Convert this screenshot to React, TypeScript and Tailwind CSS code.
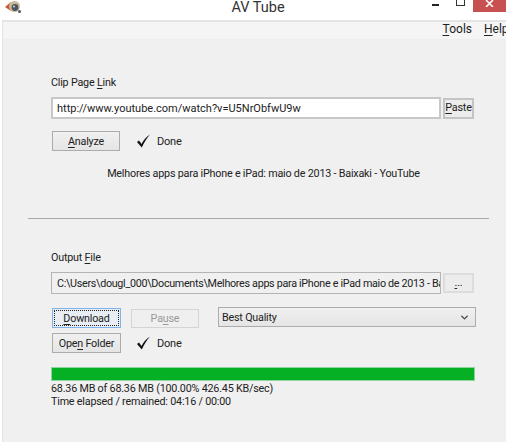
import React from 'react';
import { ChevronDown } from 'lucide-react';

const Key: React.FC<{ children: React.ReactNode }> = ({ children }) => <span className="underline underline-offset-2">{children}</span>;

const CheckMark: React.FC = () => (
  <svg width="15" height="14" viewBox="0 0 15 14" className="shrink-0">
    <path d="M1 8 L3 6.5 L5.5 10 C7.5 6 10 3 14 0.5 C10.5 4.5 8 8.5 5.8 13.5 Z" fill="#111" />
  </svg>
);

const Done: React.FC = () => (
  <div className="flex items-center gap-[6px]">
    <CheckMark />
    <span className="text-[11px]">Done</span>
  </div>
);

const App: React.FC = () => {
  return (
    <div className='font-["Roboto","Open_Sans",sans-serif] flex flex-col w-[506px] h-[442px] overflow-hidden bg-white text-[10.75px] tracking-[-0.2px] leading-[13px] text-[#222]'>
      {/* title bar */}
      <div className="relative flex h-[20px] shrink-0 items-start">
        <svg width="18" height="15" viewBox="0 0 18 15" className="ml-[4px]">
          <path d="M1 7 L7 2 L7 11 Z" fill="#c8562a" />
          <circle cx="10.5" cy="6.5" r="5.5" fill="#c9b99c" />
          <circle cx="11" cy="7.5" r="3.4" fill="#4a5560" />
          <circle cx="10" cy="6.5" r="1" fill="#d8d8d8" />
          <circle cx="15.5" cy="11.5" r="1.5" fill="#555" />
        </svg>
        <div className="absolute left-[10px] right-0 -top-[2px] text-center text-[14.5px] leading-[20px] tracking-normal text-[#333]">AV Tube</div>
        <div className="ml-auto flex items-start">
          <div className="mt-[4px] mr-[17px] h-[2px] w-[7px] bg-[#222]" />
          <div className="mr-[8px] h-[6px] w-[9px] border border-t-0 border-[#333]" />
          <div className="flex h-[12px] w-[33px] items-start justify-center bg-[#c75050]">
            <svg width="9" height="7" viewBox="0 0 9 7">
              <path d="M1 0 L4.5 3.5 L8 0 M4.5 3.5 L1 7 M4.5 3.5 L8 7" stroke="#fff" strokeWidth="1.6" fill="none" />
            </svg>
          </div>
        </div>
      </div>

      {/* window body */}
      <div className="ml-[2px] flex flex-1 flex-col border-l border-t-2 border-[#e4e4e4] bg-[#f0f0f0]">
        <div className="flex h-[18px] shrink-0 justify-end gap-[12px] overflow-hidden border-b border-[#eeeeee] bg-[#f5f5f5] pt-[1px] text-[12px] tracking-normal">
          <span><Key>T</Key>ools</span>
          <span className="w-[22px] overflow-hidden"><Key>H</Key>elp</span>
        </div>

        <div className="flex flex-col pl-[48px] pr-[30px] pt-[36px]">
          <div>Clip Page <Key>L</Key>ink</div>

          <div className="mt-[8px] flex items-center gap-[2px]">
            <div className="flex h-[22px] w-[390px] items-center border-2 border-[#c8c8c8] bg-white pl-[4px] text-[11px] tracking-normal">
              http://www.youtube.com/watch?v=U5NrObfwU9w
            </div>
            <button className="h-[21px] w-[31px] border-2 border-[#c4c4c4] bg-[#ececec] leading-none"><Key>P</Key>aste</button>
          </div>

          <div className="mt-[12px] flex items-center gap-[16px] pl-[1px]">
            <button className="h-[20px] w-[68px] border border-[#acacac] bg-gradient-to-b from-[#f0f0f0] to-[#e5e5e5]"><Key>A</Key>nalyze</button>
            <Done />
          </div>

          <div className="mt-[16px] px-[6px] text-center">Melhores apps para iPhone e iPad: maio de 2013 - Baixaki - YouTube</div>
        </div>

        <div className="ml-[25px] mr-[17px] mt-[38px] h-px bg-[#a8a8a8]" />

        <div className="flex flex-col pl-[48px] pr-[30px] pt-[32px]">
          <div><span>Output </span><Key>F</Key>ile</div>

          <div className="mt-[8px] flex items-center gap-[2px]">
            <div className="flex h-[22px] w-[390px] items-center overflow-hidden whitespace-nowrap border border-[#b4b4b4] bg-[#f0f0f0] pl-[5px] tracking-[-0.3px]">
              C:\Users\dougl_000\Documents\Melhores apps para iPhone e iPad maio de 2013 - Baixaki
            </div>
            <button className="h-[20px] w-[31px] border-2 border-[#dcdcdc] bg-[#ececec] leading-none"><Key>.</Key>..</button>
          </div>

          <div className="mt-[14px] flex items-start pl-[1px]">
            <button className="h-[20px] w-[69px] border border-[#7eb4ea] bg-[#e8eef4] p-[1px]">
              <span className="flex h-full w-full items-center justify-center border border-dotted border-[#222]"><Key>D</Key>ownload</span>
            </button>
            <button className="ml-[10px] mt-[1px] h-[19px] w-[68px] border border-[#d4d4d4] bg-[#efefef] text-[#9a9a9a]">Pa<Key>u</Key>se</button>
            <div className="ml-[19px] -mt-[1px] flex h-[20px] w-[258px] items-center justify-between border border-[#acacac] bg-gradient-to-b from-[#f0f0f0] to-[#e5e5e5] px-[3px]">
              <span>Best Quality</span>
              <ChevronDown size={11} strokeWidth={3} className="mr-[2px] text-[#444]" />
            </div>
          </div>

          <div className="mt-[5px] flex items-center gap-[15px] pl-[1px]">
            <button className="h-[20px] w-[69px] whitespace-nowrap border border-[#acacac] bg-gradient-to-b from-[#f0f0f0] to-[#e5e5e5]">Ope<Key>n</Key> Folder</button>
            <Done />
          </div>

          <div className="mt-[14px] h-[14px] w-[424px] border border-[#8fd49f] bg-[#06b025]" />

          <div className="mt-[1px]">68.36 MB of 68.36 MB (100.00% 426.45 KB/sec)</div>
          <div>Time elapsed / remained: 04:16 / 00:00</div>
        </div>
      </div>
    </div>
  );
};

export default App;
